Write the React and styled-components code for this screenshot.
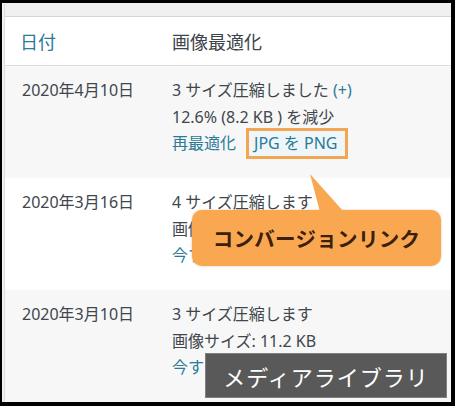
import React from "react";
import styled, { createGlobalStyle } from "styled-components";

const GlobalStyle = createGlobalStyle`
  html, body {
    margin: 0;
    padding: 0;
    background: #000;
  }
  body {
    font-family: "Noto Sans", "Noto Sans CJK JP", sans-serif;
  }
`;

const rows = [
  {
    date: "2020年4月10日",
    striped: true,
    lines: ["3 サイズ圧縮しました", "12.6% (8.2 KB ) を減少"],
    extra: true,
    action: "再最適化",
  },
  {
    date: "2020年3月16日",
    striped: false,
    lines: ["4 サイズ圧縮します", "画像サイズ: 14.5 KB"],
    action: "今すぐ最適化",
  },
  {
    date: "2020年3月10日",
    striped: true,
    lines: ["3 サイズ圧縮します", "画像サイズ: 11.2 KB"],
    action: "今すぐ最適化",
  },
];

export default function App() {
  return (
    <>
      <GlobalStyle />
      <Stage>
        <Frame>
          <Panel>
            <TopBar />
            <HeaderRow>
              <HeadDate>日付</HeadDate>
              <HeadTitle>画像最適化</HeadTitle>
            </HeaderRow>
            {rows.map((row) => (
              <Row key={row.date} $striped={row.striped}>
                <DateCell>{row.date}</DateCell>
                <InfoCell>
                  <Line>
                    {row.lines[0]}
                    {row.extra && <Link> (+)</Link>}
                  </Line>
                  <Line>{row.lines[1]}</Line>
                  <Line>
                    <Link>{row.action}</Link>
                    {row.extra && <Highlight>JPG を PNG</Highlight>}
                  </Line>
                </InfoCell>
              </Row>
            ))}
          </Panel>
        </Frame>
        <Callout>コンバージョンリンク</Callout>
        <Label>メディアライブラリ</Label>
      </Stage>
    </>
  );
}

const Stage = styled.div`
  position: relative;
  width: 455px;
  height: 406px;
  overflow: hidden;
`;

const Frame = styled.div`
  width: 455px;
  height: 406px;
  box-sizing: border-box;
  border-style: solid;
  border-color: #000;
  border-width: 3px 4px 4px 2px;
  background: #f2f2f2;
  padding-left: 2px;
`;

const Panel = styled.div`
  height: 100%;
  background: #fff;
  border-left: 1px solid #dcdcde;
  display: flex;
  flex-direction: column;
`;

const TopBar = styled.div`
  height: 13px;
  background: #f0f0f1;
  border-bottom: 1px solid #d6d6d8;
`;

const HeaderRow = styled.div`
  display: grid;
  grid-template-columns: 152px 1fr;
  height: 48px;
  align-items: center;
  padding-left: 15px;
  border-bottom: 1px solid #dcdcde;
  font-size: 18px;
`;

const HeadDate = styled.div`
  color: #2a7b97;
`;

const HeadTitle = styled.div`
  color: #3c434a;
`;

const Row = styled.div`
  display: grid;
  grid-template-columns: 150px 1fr;
  flex: 1;
  padding: 11px 0 0 17px;
  background: ${(p) => (p.$striped ? "#f7f7f7" : "#fff")};
  font-size: 16px;
  line-height: 26.5px;
  color: #40464c;
`;

const DateCell = styled.div`
  color: #40464c;
`;

const InfoCell = styled.div`
  display: flex;
  flex-direction: column;
`;

const Line = styled.div`
  display: flex;
  align-items: center;
  white-space: nowrap;
  height: 26.5px;
`;

const Link = styled.span`
  color: #2a7b97;
  white-space: pre;
`;

const Highlight = styled.span`
  margin: -3px 0 -3px 10px;
  height: 25px;
  line-height: 25px;
  padding: 0 7px 0 5px;
  border: 3px solid #f2a552;
  background: #eef6f9;
  color: #2a7b97;
`;

const Callout = styled.div`
  position: absolute;
  left: 192px;
  top: 210px;
  width: 249px;
  height: 56px;
  border-radius: 10px;
  background: #f9a851;
  box-shadow: 0 0 2px rgba(180, 110, 40, 0.5);
  display: flex;
  align-items: center;
  justify-content: center;
  font-family: "Noto Sans CJK JP", sans-serif;
  font-size: 20.5px;
  font-weight: 700;
  letter-spacing: 0.3px;
  color: #3b200c;

  &::before {
    content: "";
    position: absolute;
    left: 116px;
    top: -36px;
    width: 40px;
    height: 38px;
    background: #f9a851;
    clip-path: polygon(2px 0, 12px 100%, 36px 100%);
  }
`;

const Label = styled.div`
  position: absolute;
  left: 205px;
  top: 353px;
  width: 242px;
  height: 45px;
  box-sizing: border-box;
  background: #595959;
  border: 1px solid #808080;
  display: flex;
  align-items: center;
  justify-content: center;
  font-family: "Noto Sans CJK JP", sans-serif;
  font-size: 22px;
  letter-spacing: 1px;
  color: #fff;
`;
